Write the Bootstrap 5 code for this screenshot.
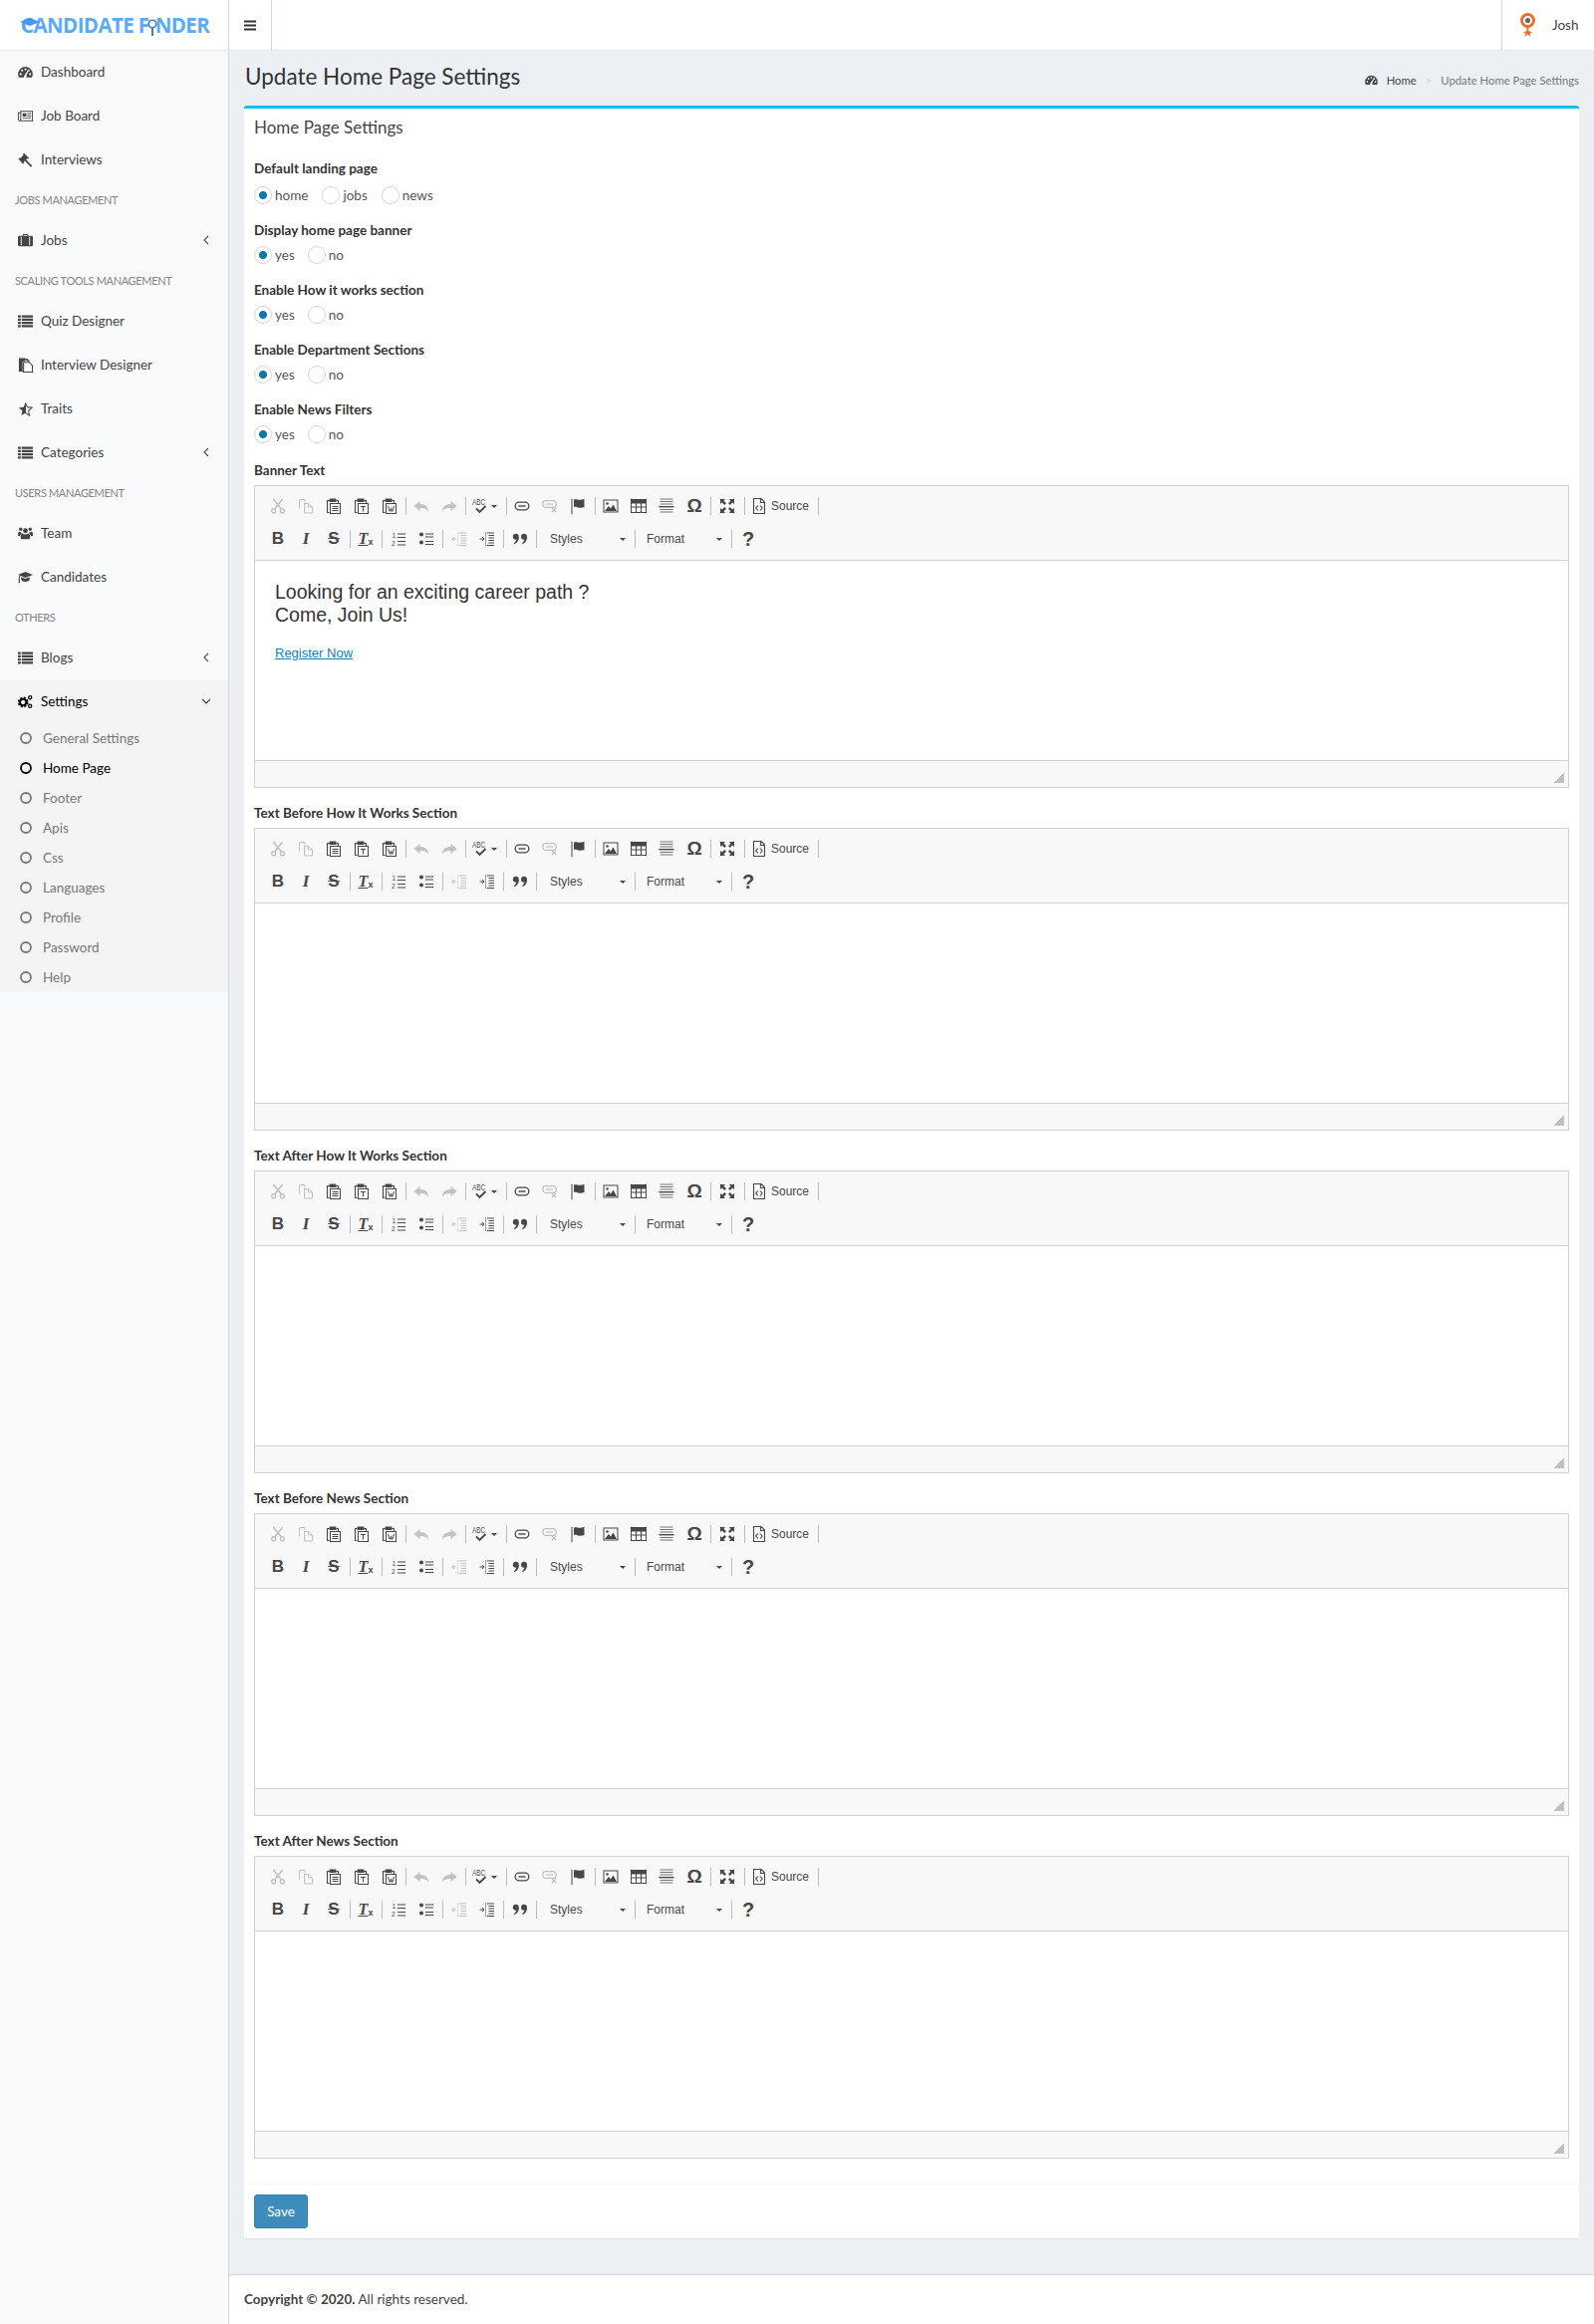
<!DOCTYPE html>
<html lang="en">
<head>
<meta charset="utf-8">
<title>Update Home Page Settings</title>
<link href="https://cdn.jsdelivr.net/npm/bootstrap@5.3.0/dist/css/bootstrap.min.css" rel="stylesheet">
<style>
body{font-family:Lato,"Liberation Sans",sans-serif;font-size:14px;color:#333;background:#ecf0f5;line-height:20px}
a{text-decoration:none}
.top-bar{height:51px;background:#fff;border-bottom:1px solid #e4e7ec}
.brand{width:230px;border-right:1px solid #d2d6de;padding-left:21px;position:relative}
.brand-text{font-family:"Open Sans",Lato,sans-serif;font-weight:700;font-size:20.5px;color:#5aabf7;letter-spacing:-.6px;white-space:nowrap}
.brand-i{color:transparent}
.brand-cap{position:absolute;left:20px;top:18px}
.brand-lens{position:absolute;left:147px;top:19px}
.toggler{width:43px;border-right:1px solid #d2d6de;color:#333}
.user-box{width:93px;border-left:1px solid #d2d6de;padding-left:18px;gap:17px;color:#444;font-size:13.5px}
.side{width:230px;flex:none;background:#f9fafc;border-right:1px solid #d2d6de}
.side-nav{margin-top:-1px}
.side-link{height:44px;padding-left:18px;color:#444;gap:8px;font-size:13.5px;padding-right:18px}
.side-link svg.ico{width:15px;height:15px;fill:#444;flex:none}
.side-head{height:37px;padding-left:15px;color:#848484;font-size:11px;letter-spacing:-.35px;white-space:nowrap}
.side-group{background:#f4f4f5;padding-bottom:0}
.side-group .side-link{color:#000}
.side-group .side-link svg.ico{fill:#000}
.side-sub{height:30px;padding-left:20px;gap:11px;color:#777;font-size:13.5px}
.side-sub svg{width:12px;height:12px;flex:none}
.side-sub.on{color:#000}
.chev{width:8px;height:12px;margin-left:auto}
.main-col{flex:1;min-width:0}
.page-head{height:55px;padding:0 15px 0 16px}
.page-title{font-size:22.5px;font-weight:400;margin:0 0 3px;color:#333;line-height:30px}
.crumb{font-size:11.3px;margin:7px 0 0;--bs-breadcrumb-divider-color:#bbb;--bs-breadcrumb-item-active-color:#777;--bs-breadcrumb-item-padding-x:9px}
.crumb a{color:#444;display:inline-flex;gap:9px;align-items:center}
.crumb .breadcrumb-item+.breadcrumb-item::before{color:#ccc}
.bx{margin:0 15px 35px;background:#fff;border:0;border-top:3px solid #00c0ef;border-radius:3px;border-bottom:1px solid #dfe3e8}
.bx-body{padding:9px 10px 25px}
.bx-title{font-size:17px;font-weight:400;color:#444;line-height:20px;margin:0 0 21px}
.fld-label{display:block;font-weight:700;font-size:13.5px;line-height:20px;color:#333;margin:0 0 5px}
.radio-row{height:20px;margin-bottom:15px;color:#555;font-size:13.5px}
.radio-row.wide{margin-top:7px}
.radio-row.tail{margin-bottom:16px}
.rd{margin-right:13px;gap:3px}
.rd .form-check-input{width:18px;height:18px;margin:0;flex:none;border:1px solid #d3d6da;background-color:#fff;box-shadow:none}
.rd .form-check-input:checked{background-color:#fff;border-color:#d3d6da;background-image:radial-gradient(circle,#0d77ab 3.6px,transparent 4.4px)}
.rd.gap-w{margin-right:14px}
.ed{border:1px solid #d1d1d1;margin:0 0 15px;height:304px}
.ed-last{margin-bottom:0}
.ed-tools{height:75px;background:#f8f8f8;border-bottom:1px solid #d1d1d1;padding:4px 0 4px 9px}
.tr{height:32px}
.tr+.tr{height:34px}
.tb{width:28px;height:32px;flex:none;color:#474747;font-family:"Liberation Sans",sans-serif}
.tb svg{width:16px;height:16px;fill:#474747}
.tb.off{opacity:.3}
.tb.w30{width:30px}
.tb.spell{width:37px;justify-content:flex-start;padding-left:5px;gap:3px}
.caret{width:0;height:0;border:3px solid transparent;border-top:3px solid #474747;border-bottom:0;flex:none}
.tb.src{width:70px;justify-content:flex-start;padding-left:5px;gap:4px;font-size:12px;color:#484848}
.sep{width:1px;height:18px;background:#bcbcbc;margin:0 1px 0 2px;flex:none}
.sep.w{margin-right:2px}
.sep.x{margin-left:3px}
.combo{flex:none;height:33px;font:12px "Liberation Sans",sans-serif;color:#484848;justify-content:space-between}
.combo.st{width:94px;padding:0 7px 0 11px}
.combo.fm{width:92px;padding:0 7px 0 9px}
.gl-b{font:700 17px "Liberation Sans",sans-serif}
.gl-i{font:italic 700 17px "Liberation Serif",serif}
.gl-s{font:700 17px "Liberation Sans",sans-serif;text-decoration:line-through}
.gl-q{font:700 20px "Liberation Sans",sans-serif}
.gl-o{font:700 19px "Liberation Sans",sans-serif}
.gl-t{font:italic 700 16px "Liberation Serif",serif;text-decoration:underline}
.gl-x{font:700 9px "Liberation Sans",sans-serif;align-self:flex-end;margin-bottom:8px}
.ed-text{height:200px;background:#fff;padding:19.5px 20px 0;font-family:"Liberation Sans",sans-serif;color:#333}
.ed-big{font-size:19.5px;line-height:23px;margin:0 0 16px}
.ed-link{font-size:13px;line-height:21px;margin:0}
.ed-link a{color:#0782c1;text-decoration:underline}
.ed-foot{height:27px;background:#f8f8f8;border-top:1px solid #d1d1d1;padding:0 4px 4px 0}
.grip{width:10px;height:10px;background:linear-gradient(135deg,transparent 50%,#bfbfbf 50%)}
.bx-foot{border-top:1px solid #f4f4f4;padding:10px}
.btn-save{--bs-btn-bg:#3c8dbc;--bs-btn-border-color:#367fa9;--bs-btn-color:#fff;--bs-btn-hover-bg:#367fa9;--bs-btn-hover-border-color:#367fa9;--bs-btn-hover-color:#fff;width:54px;height:34px;padding:0;font-size:13.5px;border-radius:3px}
.foot{background:#fff;border-top:1px solid #d2d6de;height:51px;padding:0 0 2px 15px;color:#444;font-size:13.5px}
</style>
</head>
<body>
<svg width="0" height="0" class="d-block position-absolute">
<defs>
<symbol id="i-dash" viewBox="0 0 16 16"><path d="M8 2.2A7.8 7.8 0 0 0 .2 10c0 1.300.3 2.500 1 3.600h13.600c.7-1.100 1-2.300 1-3.600A7.800 7.800 0 0 0 8 2.200z"/><g fill="#fff"><circle cx="3" cy="10" r="1.100"/><circle cx="4.500" cy="6.200" r="1.100"/><circle cx="8" cy="4.700" r="1.100"/><circle cx="11.500" cy="6.200" r="1.100"/><circle cx="13" cy="10" r="1.100"/><path d="M7 11.500 10.200 6.500l.9.400L9 11.800a1.500 1.500 0 1 1-2-.3z"/></g></symbol>
<symbol id="i-news" viewBox="0 0 16 16"><path fill-rule="evenodd" d="M2.500 2.500H16v11H1.500A1.500 1.500 0 0 1 0 12V4h2.500zM3.500 3.500V12a1 1 0 0 1-.2.500H15v-9zM1 5v7a.5.500 0 0 0 1.500 0V5z"/><path d="M5 5h4v3.500H5zM10 5h4v1h-4zM10 7.500h4v1h-4zM5 9.800h9v.9H5z"/></symbol>
<symbol id="i-gavel" viewBox="0 0 16 16"><path d="M6.500.8 11.800 6 10.600 7.200 9.900 6.500 8.700 7.700 15.300 14.300 13.900 15.700 7.300 9.100 6.100 10.300 6.800 11 5.600 12.200.4 7 1.600 5.800 2.300 6.500 5.900 2.900 5.200 2.100z"/></symbol>
<symbol id="i-case" viewBox="0 0 16 16"><path fill-rule="evenodd" d="M5 3V1.700C5 1.200 5.400 1 5.800 1h4.400c.4 0 .8.200.8.700V3h3.500c.8 0 1.500.7 1.500 1.500v8c0 .8-.7 1.500-1.500 1.500h-13C.7 14 0 13.300 0 12.500v-8C0 3.700.7 3 1.500 3zm1 0h4V2H6zM3 4v9h1V4zm9 0v9h1V4z"/></symbol>
<symbol id="i-list" viewBox="0 0 16 16"><path d="M0 2h3v2.500H0zM4 2h12v2.500H4zM0 5.500h3V8H0zM4 5.500h12V8H4zM0 9h3v2.500H0zM4 9h12v2.500H4zM0 12.500h3V15H0zM4 12.500h12V15H4z" transform="translate(0 -.5)"/></symbol>
<symbol id="i-files" viewBox="0 0 16 16"><path d="M1 .5h7v3.500H5v11H1z"/><path d="M6 5h6l3.500 3.500V15.500H6z" fill="#fff" stroke="#444" stroke-width="1.200"/><path d="M7 1h3l3 3h-3z"/></symbol>
<symbol id="i-star" viewBox="0 0 16 16"><path d="M8 1.500 6 6 1 6.600l3.700 3.300-1 4.900L8 12.300z"/><path d="M8 1.500 10 6l5 .6-3.700 3.300 1 4.900L8 12.300z" fill="none" stroke="#444" stroke-width="1.100"/></symbol>
<symbol id="i-users" viewBox="0 0 16 16"><circle cx="8" cy="5" r="2.600"/><circle cx="2.900" cy="3.400" r="1.800"/><circle cx="13.100" cy="3.400" r="1.800"/><path d="M4 14c-.7 0-1-.5-1-1.200C3 10 3.500 8 5 8c.8.700 1.800 1 3 1s2.200-.3 3-1c1.500 0 2 2 2 4.800 0 .7-.3 1.200-1 1.200z"/><path d="M0 9c0-1.800.5-3 1.500-3 .8.500 1.500.7 2.300.6-.2.700 0 1.100.4 1.500C3.300 8.400 2.600 9.500 2.400 11 .8 11 0 10.500 0 9zM16 9c0-1.800-.5-3-1.500-3-.8.500-1.500.7-2.300.6.200.700 0 1.100-.4 1.500 .9.300 1.600 1.400 1.800 2.900 1.600 0 2.400-.5 2.400-2z"/></symbol>
<symbol id="i-cap" viewBox="0 0 16 16"><path d="M8 2 16 5.200 8 8.400 2.800 6.300C2.100 7 1.800 8 1.800 9.300c.3.200.4.400.4.600 0 .2-.1.400-.3.500L2.200 14H.6l.3-3.600a.6.600 0 0 1 0-1c0-1.400.3-2.600 1-3.500L0 5.200z"/><path d="M3.500 7.800 8 9.600l4.500-1.800v2.700c0 1.300-2 2.300-4.500 2.300s-4.500-1-4.500-2.300z"/></symbol>
<symbol id="i-cogs" viewBox="0 0 16 16"><circle cx="5.500" cy="8.500" r="3.300" fill="none" stroke="currentColor" stroke-width="2"/><circle cx="5.500" cy="8.500" r="4.900" fill="none" stroke="currentColor" stroke-width="1.700" stroke-dasharray="2.400 1.450"/><circle cx="13" cy="3.500" r="1.700" fill="none" stroke="currentColor" stroke-width="1.300"/><circle cx="13" cy="12.500" r="1.700" fill="none" stroke="currentColor" stroke-width="1.300"/></symbol>
<symbol id="c-cut" viewBox="0 0 16 16"><path d="M3.500 1 11.300 11 M12.500 1 4.700 11" fill="none" stroke="#474747" stroke-width="1.700"/><circle cx="3.600" cy="13" r="2" fill="none" stroke="#474747" stroke-width="1.300"/><circle cx="12.400" cy="13" r="2" fill="none" stroke="#474747" stroke-width="1.300"/></symbol>
<symbol id="c-copy" viewBox="0 0 16 16"><path d="M1.500 10.500V1.500H7V4M6.500 5.500H11l3.500 3.500v6H6.500zM10.500 5.500V9h4" fill="none" stroke="#474747"/></symbol>
<symbol id="c-paste" viewBox="0 0 16 16"><path d="M3.500 2.500H1.500V14.500H3.500" fill="none" stroke="#474747" stroke-width="1.100"/><path d="M10.500 2.500H12.500V5" fill="none" stroke="#474747" stroke-width="1.100"/><rect x="3.500" y=".5" width="7" height="3.500" rx=".6"/><rect x="4.500" y="5.500" width="10" height="10" fill="none" stroke="#474747"/><path d="M6.500 8h6v1h-6zM6.500 10h6v1h-6zM6.500 12h6v1h-6z"/></symbol>
<symbol id="c-pastet" viewBox="0 0 16 16"><path d="M3.500 2.500H1.500V14.500H3.500" fill="none" stroke="#474747" stroke-width="1.100"/><path d="M10.500 2.500H12.500V5" fill="none" stroke="#474747" stroke-width="1.100"/><rect x="3.500" y=".5" width="7" height="3.500" rx=".6"/><rect x="4.500" y="5.500" width="10" height="10" fill="none" stroke="#474747"/><path d="M7 8h5v1h-2v4.500H9V9H7z"/></symbol>
<symbol id="c-pastew" viewBox="0 0 16 16"><path d="M3.500 2.500H1.500V14.500H3.500" fill="none" stroke="#474747" stroke-width="1.100"/><path d="M10.500 2.500H12.500V5" fill="none" stroke="#474747" stroke-width="1.100"/><rect x="3.500" y=".5" width="7" height="3.500" rx=".6"/><rect x="4.500" y="5.500" width="10" height="10" fill="none" stroke="#474747"/><path d="M6.500 8 8 13h1l.5-3 .5 3h1l1.500-5" fill="none" stroke="#474747"/></symbol>
<symbol id="c-undo" viewBox="0 0 16 16"><path d="M6.500 3 .5 8l6 5V10c3.500-.4 6.500.5 8.500 3-.3-4.500-3.500-7-8.500-7z"/></symbol>
<symbol id="c-redo" viewBox="0 0 16 16"><path d="M9.500 3l6 5-6 5V10C6 9.600 3 10.500 1 13c.3-4.500 3.500-7 8.500-7z"/></symbol>
<symbol id="c-spell" viewBox="0 0 16 16"><text x="0" y="7" font-family="Liberation Sans,sans-serif" font-size="8.500" textLength="13" lengthAdjust="spacingAndGlyphs" fill="#474747">ABC</text><path d="M4 10.500l3.500 3.500 6-6" fill="none" stroke="#474747" stroke-width="1.900"/></symbol>
<symbol id="c-link" viewBox="0 0 16 16"><rect x="1.200" y="4.200" width="13.600" height="7.600" rx="3.800" fill="none" stroke="#474747" stroke-width="1.300"/><path d="M4.500 7.300h7v1.400h-7z"/></symbol>
<symbol id="c-unlink" viewBox="0 0 16 16"><rect x=".7" y="2.700" width="13.600" height="6.600" rx="3.300" fill="none" stroke="#474747" stroke-width="1.300"/><path d="M4 5.500h7v1.200H4z"/><path d="M10 10l4 4M14 10l-4 4" stroke="#474747" stroke-width="1.400"/></symbol>
<symbol id="c-flag" viewBox="0 0 16 16"><path d="M1.500 1h1v15h-1zM4 1.500c3-1 4 1 8 0l2.500-.5v8c-2.500 1.200-5 .9-7 .2C6 8.700 5 8.700 4 9z"/></symbol>
<symbol id="c-image" viewBox="0 0 16 16"><path fill-rule="evenodd" d="M.5 1.500h15v13H.5zM1.500 2.500v11h13v-11z"/><circle cx="4.500" cy="5.500" r="1.300"/><path d="M2 13l4-5 2 2.500 2.500-4L14 13z"/></symbol>
<symbol id="c-table" viewBox="0 0 16 16"><path fill-rule="evenodd" d="M0 1h16v14H0zM1 5.500V8.500H5V5.500zM6 5.500V8.500h4V5.500zM11 5.500V8.500h4V5.500zM1 9.500V14H5V9.500zM6 9.500V14h4V9.500zM11 9.500V14h4V9.500z"/></symbol>
<symbol id="c-hr" viewBox="0 0 16 16"><g fill-opacity=".75"><path d="M1.500 .5h13v1h-13zM1.500 3h13v1h-13zM1.500 5.500h13v1h-13zM1.500 11h13v1h-13zM1.500 13.500h13v1h-13z"/></g><path d="M.5 8h15v1.400H.5z"/></symbol>
<symbol id="c-max" viewBox="0 0 16 16"><path d="M1 1h5L4.500 2.800 7 5.300 5.300 7 2.800 4.500 1 6zM15 1v5L13.200 4.500 10.700 7 9 5.300 11.500 2.800 10 1zM1 15v-5l1.800 1.500L5.300 9 7 10.700 4.500 13.200 6 15zM15 15h-5l1.500-1.800L9 10.700 10.700 9l2.500 2.500L15 10z"/></symbol>
<symbol id="c-src" viewBox="0 0 16 16"><path d="M2.500 .5H10l3.500 3.500v11.500h-11zM9.500 .5V4.500h4" fill="none" stroke="#474747" stroke-width="1.100"/><path d="M7 7.500 4.800 10 7 12.500M9 7.500l2.200 2.500L9 12.500" fill="none" stroke="#474747" stroke-width="1.100"/></symbol>
<symbol id="c-ol" viewBox="0 0 16 16"><path d="M7 2.500h8v1H7zM7 6h8v1H7zM7 10h8v1H7zM7 13.500h8v1H7z"/><text x="1.500" y="7" font-family="Liberation Sans,sans-serif" font-size="6.500" fill="#474747">1</text><text x="1" y="15" font-family="Liberation Sans,sans-serif" font-size="6.500" fill="#474747">2</text></symbol>
<symbol id="c-ul" viewBox="0 0 16 16"><circle cx="3" cy="3.500" r="2"/><circle cx="3" cy="11.500" r="2"/><path d="M7 3h8v1.100H7zM7 6h8v1.100H7zM7 10.500h8v1.100H7zM7 13.500h8v1.100H7z" transform="translate(0 -.5)"/></symbol>
<symbol id="c-outd" viewBox="0 0 16 16"><path d="M8 1.500h7v.9H8zM9.500 4h5.500v.9H9.500zM9.500 6.500h5.500v.9H9.500zM9.500 9h5.500v.9H9.500zM9.500 11.500h5.500v.9H9.500zM8 14h7v.9H8z"/><path d="M6.500 1.500V15" stroke="#474747" stroke-dasharray="1 1"/><path d="M.5 8h4.500M3 6 1 8l2 2" fill="none" stroke="#474747"/></symbol>
<symbol id="c-ind" viewBox="0 0 16 16"><path d="M8 1.500h7v.9H8zM9.500 4h5.500v.9H9.500zM9.500 6.500h5.500v.9H9.500zM9.500 9h5.500v.9H9.500zM9.500 11.500h5.500v.9H9.500zM8 14h7v.9H8z"/><path d="M6.500 1.500V15" stroke="#474747" stroke-dasharray="1 1"/><path d="M.5 8h4.500M3 6l2 2-2 2" fill="none" stroke="#474747"/></symbol>
<symbol id="c-quote" viewBox="0 0 16 16"><circle cx="3.800" cy="5.800" r="3"/><circle cx="12" cy="5.800" r="3"/><path d="M4.500 6h2.300c0 3.500-1.500 6-4.300 7l-.6-1c1.800-1 2.600-3 2.600-6zM12.700 6H15c0 3.500-1.500 6-4.300 7l-.6-1c1.800-1 2.600-3 2.600-6z"/></symbol>
</defs>
</svg>

<template id="tools">
  <div class="ed-tools">
    <div class="tr d-flex align-items-center">
      <span class="tb off d-flex align-items-center justify-content-center"><svg><use href="#c-cut"/></svg></span>
      <span class="tb off d-flex align-items-center justify-content-center"><svg><use href="#c-copy"/></svg></span>
      <span class="tb d-flex align-items-center justify-content-center"><svg><use href="#c-paste"/></svg></span>
      <span class="tb d-flex align-items-center justify-content-center"><svg><use href="#c-pastet"/></svg></span>
      <span class="tb d-flex align-items-center justify-content-center"><svg><use href="#c-pastew"/></svg></span>
      <span class="sep"></span>
      <span class="tb off d-flex align-items-center justify-content-center"><svg><use href="#c-undo"/></svg></span>
      <span class="tb off d-flex align-items-center justify-content-center"><svg><use href="#c-redo"/></svg></span>
      <span class="sep"></span>
      <span class="tb spell d-flex align-items-center"><svg><use href="#c-spell"/></svg><i class="caret"></i></span>
      <span class="sep"></span>
      <span class="tb d-flex align-items-center justify-content-center"><svg><use href="#c-link"/></svg></span>
      <span class="tb off d-flex align-items-center justify-content-center"><svg><use href="#c-unlink"/></svg></span>
      <span class="tb d-flex align-items-center justify-content-center"><svg><use href="#c-flag"/></svg></span>
      <span class="sep x"></span>
      <span class="tb d-flex align-items-center justify-content-center"><svg><use href="#c-image"/></svg></span>
      <span class="tb d-flex align-items-center justify-content-center"><svg><use href="#c-table"/></svg></span>
      <span class="tb d-flex align-items-center justify-content-center"><svg><use href="#c-hr"/></svg></span>
      <span class="tb gl-o d-flex align-items-center justify-content-center">Ω</span>
      <span class="sep"></span>
      <span class="tb w30 d-flex align-items-center justify-content-center"><svg><use href="#c-max"/></svg></span>
      <span class="sep"></span>
      <span class="tb src d-flex align-items-center"><svg><use href="#c-src"/></svg>Source</span>
      <span class="sep"></span>
    </div>
    <div class="tr d-flex align-items-center">
      <span class="tb gl-b d-flex align-items-center justify-content-center">B</span>
      <span class="tb gl-i d-flex align-items-center justify-content-center">I</span>
      <span class="tb gl-s d-flex align-items-center justify-content-center">S</span>
      <span class="sep"></span>
      <span class="tb d-flex align-items-center justify-content-center"><b class="gl-t">T</b><b class="gl-x">x</b></span>
      <span class="sep w"></span>
      <span class="tb d-flex align-items-center justify-content-center"><svg><use href="#c-ol"/></svg></span>
      <span class="tb d-flex align-items-center justify-content-center"><svg><use href="#c-ul"/></svg></span>
      <span class="sep w"></span>
      <span class="tb off d-flex align-items-center justify-content-center"><svg><use href="#c-outd"/></svg></span>
      <span class="tb d-flex align-items-center justify-content-center"><svg><use href="#c-ind"/></svg></span>
      <span class="sep w"></span>
      <span class="tb d-flex align-items-center justify-content-center"><svg><use href="#c-quote"/></svg></span>
      <span class="sep w"></span>
      <span class="combo st d-flex align-items-center">Styles<i class="caret"></i></span>
      <span class="sep w"></span>
      <span class="combo fm d-flex align-items-center">Format<i class="caret"></i></span>
      <span class="sep w"></span>
      <span class="tb gl-q d-flex align-items-center justify-content-center">?</span>
    </div>
  </div>
</template>

<header class="top-bar d-flex">
  <a class="brand d-flex align-items-center" href="#">
    <span class="brand-text">CANDIDATE F<span class="brand-i">I</span>NDER</span>
    <svg class="brand-cap" width="22" height="14" viewBox="0 0 22 14"><path d="M10 0 20 4 10 8 3.500 5.400V11H2.500V5L0 4z" fill="#3f9bf0"/></svg>
    <svg class="brand-lens" width="12" height="17" viewBox="0 0 12 17"><circle cx="6" cy="5" r="3.800" fill="#fff" stroke="#3d7fb5" stroke-width="1.600"/><path d="M5 9h2v8H5z" fill="#3d7fb5"/></svg>
  </a>
  <a class="toggler d-flex align-items-center justify-content-center" href="#" aria-label="Toggle">
    <svg width="12" height="11" viewBox="0 0 12 11"><path d="M0 .5h12v2H0zM0 4.500h12v2H0zM0 8.500h12v2H0z" fill="#333"/></svg>
  </a>
  <a class="user-box ms-auto d-flex align-items-center" href="#">
    <svg width="15" height="25" viewBox="0 0 15 25"><circle cx="7.500" cy="7.500" r="6" fill="#fff" stroke="#e8702a" stroke-width="3"/><circle cx="7.500" cy="7.500" r="2.600" fill="#666"/><path d="M6.500 14h2v4l4 2-3 .5 1 3.500-3-2.500-3 2.500 1-3.500-3-.5 4-2z" fill="#e8702a"/></svg>
    <span>Josh</span>
  </a>
</header>

<div class="d-flex">
  <aside class="side">
    <nav class="side-nav d-flex flex-column">
      <a class="side-link d-flex align-items-center" href="#"><svg class="ico"><use href="#i-dash"/></svg>Dashboard</a>
      <a class="side-link d-flex align-items-center" href="#"><svg class="ico"><use href="#i-news"/></svg>Job Board</a>
      <a class="side-link d-flex align-items-center" href="#"><svg class="ico"><use href="#i-gavel"/></svg>Interviews</a>
      <div class="side-head d-flex align-items-center">JOBS MANAGEMENT</div>
      <a class="side-link d-flex align-items-center" href="#"><svg class="ico"><use href="#i-case"/></svg>Jobs<svg class="chev" viewBox="0 0 8 12"><path d="M6 2 2 6l4 4" fill="none" stroke="#555" stroke-width="1.200"/></svg></a>
      <div class="side-head d-flex align-items-center">SCALING TOOLS MANAGEMENT</div>
      <a class="side-link d-flex align-items-center" href="#"><svg class="ico"><use href="#i-list"/></svg>Quiz Designer</a>
      <a class="side-link d-flex align-items-center" href="#"><svg class="ico"><use href="#i-files"/></svg>Interview Designer</a>
      <a class="side-link d-flex align-items-center" href="#"><svg class="ico"><use href="#i-star"/></svg>Traits</a>
      <a class="side-link d-flex align-items-center" href="#"><svg class="ico"><use href="#i-list"/></svg>Categories<svg class="chev" viewBox="0 0 8 12"><path d="M6 2 2 6l4 4" fill="none" stroke="#555" stroke-width="1.200"/></svg></a>
      <div class="side-head d-flex align-items-center">USERS MANAGEMENT</div>
      <a class="side-link d-flex align-items-center" href="#"><svg class="ico"><use href="#i-users"/></svg>Team</a>
      <a class="side-link d-flex align-items-center" href="#"><svg class="ico"><use href="#i-cap"/></svg>Candidates</a>
      <div class="side-head d-flex align-items-center">OTHERS</div>
      <a class="side-link d-flex align-items-center" href="#"><svg class="ico"><use href="#i-list"/></svg>Blogs<svg class="chev" viewBox="0 0 8 12"><path d="M6 2 2 6l4 4" fill="none" stroke="#555" stroke-width="1.200"/></svg></a>
      <div class="side-group">
        <a class="side-link d-flex align-items-center" href="#"><svg class="ico"><use href="#i-cogs"/></svg>Settings<svg class="chev" viewBox="0 0 8 12"><path d="M0 4l4 4 4-4" fill="none" stroke="#333" stroke-width="1.100"/></svg></a>
        <a class="side-sub d-flex align-items-center" href="#"><svg viewBox="0 0 12 12"><circle cx="6" cy="6" r="5" fill="none" stroke="#777" stroke-width="1.800"/></svg>General Settings</a>
        <a class="side-sub on d-flex align-items-center" href="#"><svg viewBox="0 0 12 12"><circle cx="6" cy="6" r="5" fill="none" stroke="#000" stroke-width="1.800"/></svg>Home Page</a>
        <a class="side-sub d-flex align-items-center" href="#"><svg viewBox="0 0 12 12"><circle cx="6" cy="6" r="5" fill="none" stroke="#777" stroke-width="1.800"/></svg>Footer</a>
        <a class="side-sub d-flex align-items-center" href="#"><svg viewBox="0 0 12 12"><circle cx="6" cy="6" r="5" fill="none" stroke="#777" stroke-width="1.800"/></svg>Apis</a>
        <a class="side-sub d-flex align-items-center" href="#"><svg viewBox="0 0 12 12"><circle cx="6" cy="6" r="5" fill="none" stroke="#777" stroke-width="1.800"/></svg>Css</a>
        <a class="side-sub d-flex align-items-center" href="#"><svg viewBox="0 0 12 12"><circle cx="6" cy="6" r="5" fill="none" stroke="#777" stroke-width="1.800"/></svg>Languages</a>
        <a class="side-sub d-flex align-items-center" href="#"><svg viewBox="0 0 12 12"><circle cx="6" cy="6" r="5" fill="none" stroke="#777" stroke-width="1.800"/></svg>Profile</a>
        <a class="side-sub d-flex align-items-center" href="#"><svg viewBox="0 0 12 12"><circle cx="6" cy="6" r="5" fill="none" stroke="#777" stroke-width="1.800"/></svg>Password</a>
        <a class="side-sub d-flex align-items-center" href="#"><svg viewBox="0 0 12 12"><circle cx="6" cy="6" r="5" fill="none" stroke="#777" stroke-width="1.800"/></svg>Help</a>
      </div>
    </nav>
  </aside>

  <div class="main-col">
    <div class="page-head d-flex align-items-center justify-content-between">
      <h1 class="page-title">Update Home Page Settings</h1>
      <ol class="breadcrumb crumb" style="--bs-breadcrumb-divider:'>'">
        <li class="breadcrumb-item"><a href="#"><svg width="13" height="13"><use href="#i-dash" fill="#444"/></svg>Home</a></li>
        <li class="breadcrumb-item active">Update Home Page Settings</li>
      </ol>
    </div>
    <section class="card bx">
      <div class="bx-body">
        <h3 class="bx-title">Home Page Settings</h3>

        <label class="fld-label">Default landing page</label>
        <div class="radio-row wide d-flex align-items-center">
          <label class="rd gap-w d-flex align-items-center"><input class="form-check-input" type="radio" name="r1" checked>home</label>
          <label class="rd gap-w d-flex align-items-center"><input class="form-check-input" type="radio" name="r1">jobs</label>
          <label class="rd d-flex align-items-center"><input class="form-check-input" type="radio" name="r1">news</label>
        </div>
        <label class="fld-label">Display home page banner</label>
        <div class="radio-row d-flex align-items-center">
          <label class="rd d-flex align-items-center"><input class="form-check-input" type="radio" name="r2" checked>yes</label>
          <label class="rd d-flex align-items-center"><input class="form-check-input" type="radio" name="r2">no</label>
        </div>
        <label class="fld-label">Enable How it works section</label>
        <div class="radio-row d-flex align-items-center">
          <label class="rd d-flex align-items-center"><input class="form-check-input" type="radio" name="r3" checked>yes</label>
          <label class="rd d-flex align-items-center"><input class="form-check-input" type="radio" name="r3">no</label>
        </div>
        <label class="fld-label">Enable Department Sections</label>
        <div class="radio-row d-flex align-items-center">
          <label class="rd d-flex align-items-center"><input class="form-check-input" type="radio" name="r4" checked>yes</label>
          <label class="rd d-flex align-items-center"><input class="form-check-input" type="radio" name="r4">no</label>
        </div>
        <label class="fld-label">Enable News Filters</label>
        <div class="radio-row tail d-flex align-items-center">
          <label class="rd d-flex align-items-center"><input class="form-check-input" type="radio" name="r5" checked>yes</label>
          <label class="rd d-flex align-items-center"><input class="form-check-input" type="radio" name="r5">no</label>
        </div>

        <label class="fld-label">Banner Text</label>
        <div class="ed">
          <div class="ed-text">
            <p class="ed-big">Looking for an exciting career path ?<br>Come, Join Us!</p>
            <p class="ed-link"><a href="#">Register Now</a></p>
          </div>
          <div class="ed-foot d-flex justify-content-end align-items-end"><span class="grip"></span></div>
        </div>
        <label class="fld-label">Text Before How It Works Section</label>
        <div class="ed">
          <div class="ed-text"></div>
          <div class="ed-foot d-flex justify-content-end align-items-end"><span class="grip"></span></div>
        </div>
        <label class="fld-label">Text After How It Works Section</label>
        <div class="ed">
          <div class="ed-text"></div>
          <div class="ed-foot d-flex justify-content-end align-items-end"><span class="grip"></span></div>
        </div>
        <label class="fld-label">Text Before News Section</label>
        <div class="ed">
          <div class="ed-text"></div>
          <div class="ed-foot d-flex justify-content-end align-items-end"><span class="grip"></span></div>
        </div>
        <label class="fld-label">Text After News Section</label>
        <div class="ed ed-last">
          <div class="ed-text"></div>
          <div class="ed-foot d-flex justify-content-end align-items-end"><span class="grip"></span></div>
        </div>
      </div>
      <div class="bx-foot"><button class="btn btn-primary btn-save" type="button">Save</button></div>
    </section>
    <footer class="foot d-flex align-items-center"><span><b>Copyright © 2020.</b> All rights reserved.</span></footer>
  </div>
</div>
<script>
document.querySelectorAll('.ed').forEach(function(e){
  e.insertBefore(document.getElementById('tools').content.cloneNode(true), e.firstChild);
});
</script>
<script src="https://cdn.jsdelivr.net/npm/bootstrap@5.3.0/dist/js/bootstrap.bundle.min.js"></script>
</body>
</html>
